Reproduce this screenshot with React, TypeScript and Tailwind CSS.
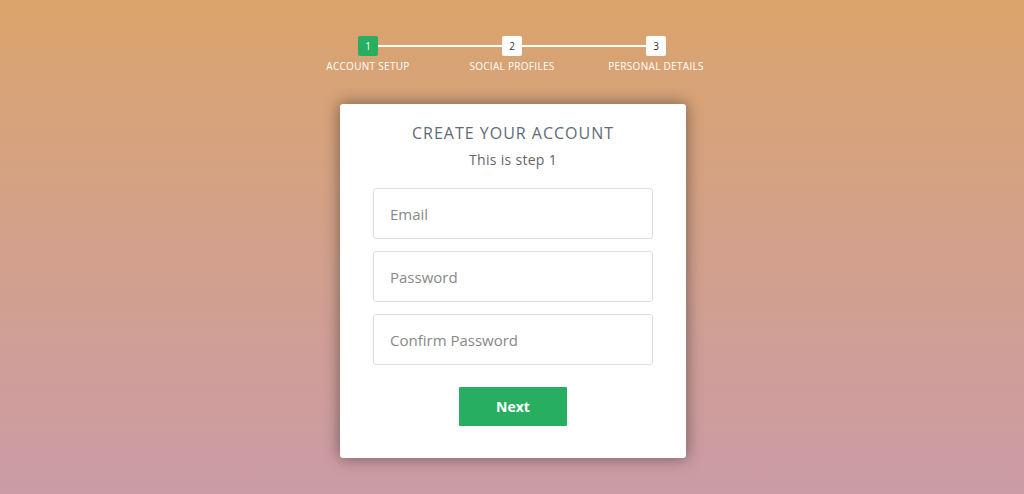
import React from "react";

const steps = ["Account Setup", "Social Profiles", "Personal Details"];

const fields = ["Email", "Password", "Confirm Password"];

export default function App() {
    return (
        <div
            className="w-full h-[494px] bg-gradient-to-b from-[#daa46b] to-[#cb9ba6] flex flex-col items-center overflow-hidden"
            style={{fontFamily: "'Open Sans', 'Liberation Sans', sans-serif"}}
        >
            {/* progress bar */}
            <div className="mt-[36px] flex">
                {steps.map((step, index) => (
                    <div key={index} className="relative w-[144px] flex flex-col items-center">
                        {index > 0 && (
                            <div className="absolute top-[9px] right-1/2 w-[144px] h-[2px] bg-white" />
                        )}
                        <div
                            className={
                                "relative z-10 w-[20px] h-[20px] rounded-[2px] flex items-center justify-center text-[10px] " +
                                (index === 0 ? "bg-[#27ae60] text-white" : "bg-white text-[#333]")
                            }
                        >
                            {index + 1}
                        </div>
                        <div className="mt-[3px] text-[10px] uppercase text-white whitespace-nowrap tracking-[0.3px]">
                            {step}
                        </div>
                    </div>
                ))}
            </div>

            {/* card */}
            <div className="mt-[30px] ml-[2px] w-[346px] h-[354px] bg-white rounded-[3px] shadow-[0_0_15px_1px_rgba(0,0,0,0.4)] flex flex-col items-center pt-[17px] px-[33px]">
                <h2 className="text-[16px] text-[#5f6b76] uppercase tracking-[1px]">Create your account</h2>
                <h3 className="mt-[4px] text-[14px] text-[#666] tracking-[0.3px]">This is step 1</h3>
                <div className="mt-[18px] w-full flex flex-col gap-[12px]">
                    {fields.map((field, index) => (
                        <input
                            key={index}
                            type={field === "Email" ? "text" : "password"}
                            placeholder={field}
                            className="w-full h-[51px] border border-[#ddd] rounded-[3px] px-[16px] text-[15px] text-[#2c3e50] placeholder:text-[#888] outline-none"
                        />
                    ))}
                </div>
                <button
                    type="button"
                    className="mt-[22px] w-[108px] h-[39px] bg-[#27ae60] text-white text-[14px] font-bold rounded-[1px]"
                >
                    Next
                </button>
            </div>
        </div>
    );
}
